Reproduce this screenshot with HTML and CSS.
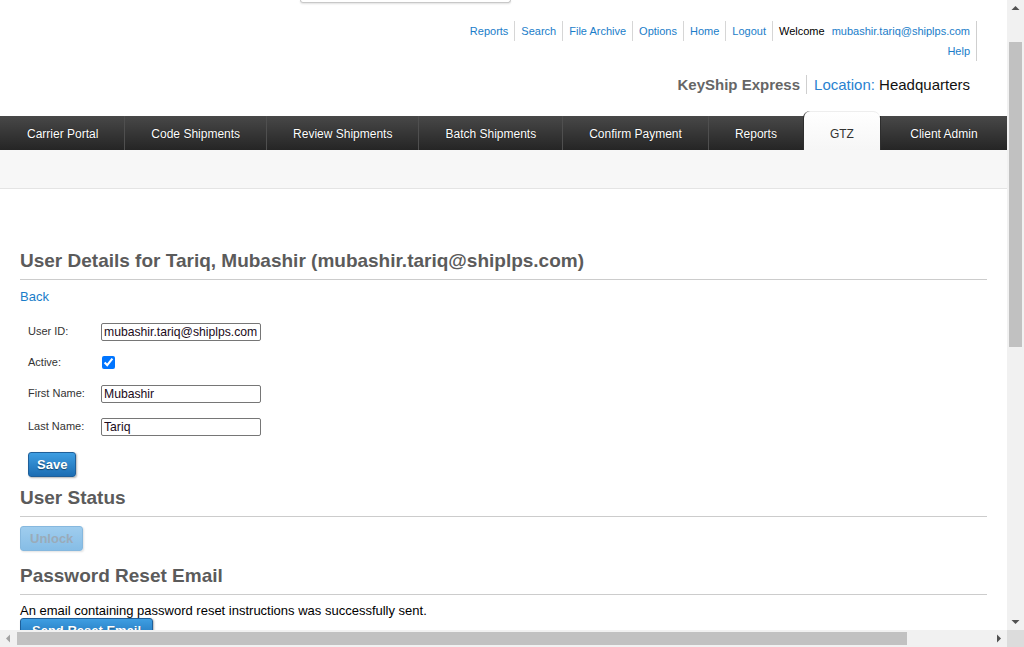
FILE: index.html
```html
<!DOCTYPE html>
<html lang="en">
<head>
<meta charset="utf-8">
<title>User Details</title>
<link rel="stylesheet" href="styles.css">
</head>
<body>
<div class="window">
  <div class="viewport">
    <header class="header">
      <div class="search-stub"></div>
      <div class="toplinks">
        <div class="toplinks-box">
          <ul class="toplinks-row">
            <li><a href="#">Reports</a></li>
            <li><a href="#">Search</a></li>
            <li><a href="#">File Archive</a></li>
            <li><a href="#">Options</a></li>
            <li><a href="#">Home</a></li>
            <li><a href="#">Logout</a></li>
            <li class="welcome"><span>Welcome</span><a href="#">mubashir.tariq@shiplps.com</a></li>
          </ul>
          <div class="help-row"><a href="#">Help</a></div>
        </div>
      </div>
      <div class="brand">
        <span class="brand-name">KeyShip Express</span>
        <span class="brand-loc"><span class="loc-label">Location:</span> Headquarters</span>
      </div>
    </header>
    <nav class="mainnav">
      <a href="#" class="tab">Carrier Portal</a>
      <a href="#" class="tab">Code Shipments</a>
      <a href="#" class="tab">Review Shipments</a>
      <a href="#" class="tab">Batch Shipments</a>
      <a href="#" class="tab">Confirm Payment</a>
      <a href="#" class="tab">Reports</a>
      <a href="#" class="tab active">GTZ</a>
      <a href="#" class="tab last">Client Admin</a>
    </nav>
    <div class="subbar"></div>
    <main class="content">
      <h2 class="section-title first">User Details for Tariq, Mubashir (mubashir.tariq@shiplps.com)</h2>
      <a href="#" class="back">Back</a>
      <div class="form-grid">
        <label class="lbl">User ID:</label>
        <div class="fld"><input type="text" class="txt" value="mubashir.tariq@shiplps.com"></div>
        <label class="lbl">Active:</label>
        <div class="fld"><input type="checkbox" class="chk" checked></div>
        <label class="lbl">First Name:</label>
        <div class="fld"><input type="text" class="txt" value="Mubashir"></div>
        <label class="lbl">Last Name:</label>
        <div class="fld"><input type="text" class="txt" value="Tariq"></div>
      </div>
      <div class="save-row"><button class="btn">Save</button></div>
      <h2 class="section-title status">User Status</h2>
      <div class="unlock-row"><button class="btn disabled" disabled>Unlock</button></div>
      <h2 class="section-title reset">Password Reset Email</h2>
      <p class="msg">An email containing password reset instructions was successfully sent.</p>
      <button class="btn wide">Send Reset Email</button>
    </main>
  </div>
  <div class="vscroll">
    <div class="sb-arrow"><svg width="17" height="17" viewBox="0 0 17 17"><path d="M4.5 10 L8.5 6 L12.5 10 Z" fill="#505050"/></svg></div>
    <div class="vthumb"></div>
    <div class="sb-fill"></div>
    <div class="sb-arrow"><svg width="17" height="17" viewBox="0 0 17 17"><path d="M4.5 7 L8.5 11 L12.5 7 Z" fill="#505050"/></svg></div>
  </div>
  <div class="hscroll">
    <div class="sb-arrow"><svg width="17" height="17" viewBox="0 0 17 17"><path d="M10 4.5 L6 8.5 L10 12.5 Z" fill="#a3a3a3"/></svg></div>
    <div class="hthumb"></div>
    <div class="sb-fill"></div>
    <div class="sb-arrow"><svg width="17" height="17" viewBox="0 0 17 17"><path d="M7 4.5 L11 8.5 L7 12.5 Z" fill="#505050"/></svg></div>
  </div>
  <div class="corner"></div>
</div>
</body>
</html>
```

FILE: styles.css
```css
* { box-sizing: border-box; }
html, body { margin: 0; padding: 0; overflow: hidden; }
body {
  font-family: "Liberation Sans", Arial, sans-serif;
  color: #000;
  background: #fff;
}
a { color: #1a7dc9; text-decoration: none; }

.window {
  display: grid;
  grid-template-columns: 1007px 17px;
  grid-template-rows: 630px 17px;
  width: 1024px;
  height: 647px;
}
.viewport {
  overflow: hidden;
  background: #fff;
}

/* header */
.search-stub {
  margin-left: 300px;
  width: 211px;
  height: 3px;
  border: 1px solid #c8c8c8;
  border-top: none;
  border-radius: 0 0 6px 6px;
  box-shadow: 0 1px 2px rgba(0,0,0,0.12);
}
.toplinks {
  display: flex;
  justify-content: flex-end;
  margin-top: 18px;
  padding-right: 30px;
}
.toplinks-box {
  border-right: 1px solid #cfcfcf;
  font-size: 11px;
}
.toplinks-row {
  display: flex;
  list-style: none;
  margin: 0;
  padding: 0;
}
.toplinks-row li {
  line-height: 20px;
  padding: 0 6px;
  border-left: 1px solid #d6d6d6;
}
.toplinks-row li:first-child { border-left: none; padding-left: 0; }
.toplinks-row .welcome { display: flex; gap: 7px; }
.help-row {
  text-align: right;
  line-height: 20px;
  padding-right: 6px;
}
.brand {
  display: flex;
  justify-content: flex-end;
  margin-top: 14px;
  padding-right: 37px;
  font-size: 15px;
  line-height: 19px;
}
.brand-name {
  font-weight: bold;
  color: #666;
  padding-right: 6px;
}
.brand-loc {
  border-left: 1px solid #cfcfcf;
  padding-left: 7px;
  color: #111;
}
.loc-label { color: #2a82d0; }

/* nav */
.mainnav {
  display: flex;
  height: 34px;
  margin-top: 22px;
  background: linear-gradient(#484848, #252525);
}
.tab {
  flex: 0 0 auto;
  padding: 2px 26px 0;
  text-align: center;
  line-height: 32px;
  font-size: 12px;
  color: #fff;
  border-left: 1px solid #4f4f4f;
  text-shadow: 0 0 1px rgba(0,0,0,0.8);
  white-space: nowrap;
}
.tab:first-child { border-left: none; padding-left: 27px; }
.tab.last { flex: 1 1 auto; }
.tab.active {
  margin-top: -5px;
  padding-top: 7px;
  background: linear-gradient(#ffffff, #f6f6f6);
  color: #333;
  text-shadow: none;
  border-radius: 7px 7px 0 0;
  border-left: 1px solid #2e2e2e;
  box-shadow: inset 0 1px 0 #eee;
}
.tab.active + .tab { border-left: 1px solid #2e2e2e; }
.subbar {
  height: 39px;
  background: #f7f7f7;
  border-bottom: 1px solid #e4e4e4;
}

/* content */
.content {
  padding: 0 20px;
}
.section-title {
  font-size: 19px;
  line-height: 22px;
  font-weight: bold;
  color: #5b5b5b;
  margin: 0;
  padding-bottom: 7px;
  border-bottom: 1px solid #cccccc;
}
.section-title.first { margin-top: 61px; }
.section-title.status { margin-top: 10px; }
.section-title.reset { margin-top: 14px; }
.back {
  display: block;
  margin-top: 9px;
  font-size: 13px;
  line-height: 16px;
  width: max-content;
}
.form-grid {
  display: grid;
  grid-template-columns: 73px 170px;
  grid-template-rows: 31px 31px 32px 33px;
  margin-top: 11px;
  padding-left: 8px;
  align-items: center;
}
.lbl {
  font-size: 11px;
  color: #333;
  position: relative;
  top: -1px;
}
.fld { display: flex; align-items: center; }
.txt {
  width: 160px;
  height: 18px;
  border: 1px solid #767676;
  border-radius: 2px;
  padding: 1px 2px;
  font-family: "Liberation Sans", Arial, sans-serif;
  font-size: 12.2px;
  color: #1a0a20;
  background: #fff;
}
.chk {
  margin: 0 0 0 1px;
  width: 13px;
  height: 13px;
  accent-color: #0075ff;
}
.save-row { margin-top: 9px; padding-left: 8px; }
.btn {
  display: block;
  height: 25px;
  padding: 0 8px;
  font-family: "Liberation Sans", Arial, sans-serif;
  font-size: 13px;
  font-weight: bold;
  color: #fff;
  text-shadow: 0 1px 1px rgba(0,0,0,0.45);
  background: linear-gradient(#3e9ee2, #1c6db3);
  border: 1px solid #1f5f99;
  border-radius: 3px;
  box-shadow: 1px 1px 2px rgba(0,0,0,0.3);
}
.btn.wide { padding: 0 11px; }
.btn.disabled {
  background: linear-gradient(#9fcdee, #86bde6);
  border-color: #86b8de;
  color: #9aabb9;
  text-shadow: none;
  box-shadow: 1px 1px 2px rgba(0,0,0,0.12);
  padding: 0 9px;
}
.unlock-row { margin-top: 9px; }
.msg {
  margin: 8px 0 0;
  font-size: 13px;
  line-height: 15px;
}

/* scrollbars */
.vscroll {
  display: flex;
  flex-direction: column;
  background: #f1f1f1;
}
.sb-arrow {
  flex: 0 0 17px;
  height: 17px;
  width: 17px;
}
.sb-arrow svg { display: block; }
.vthumb {
  margin: 25px 2px 0;
  height: 305px;
  background: #c1c1c1;
}
.sb-fill { flex: 1; }
.hscroll {
  display: flex;
  background: #f1f1f1;
}
.hthumb {
  margin: 2px 0;
  width: 890px;
  background: #c1c1c1;
}
.corner { background: #dcdcdc; }
```
